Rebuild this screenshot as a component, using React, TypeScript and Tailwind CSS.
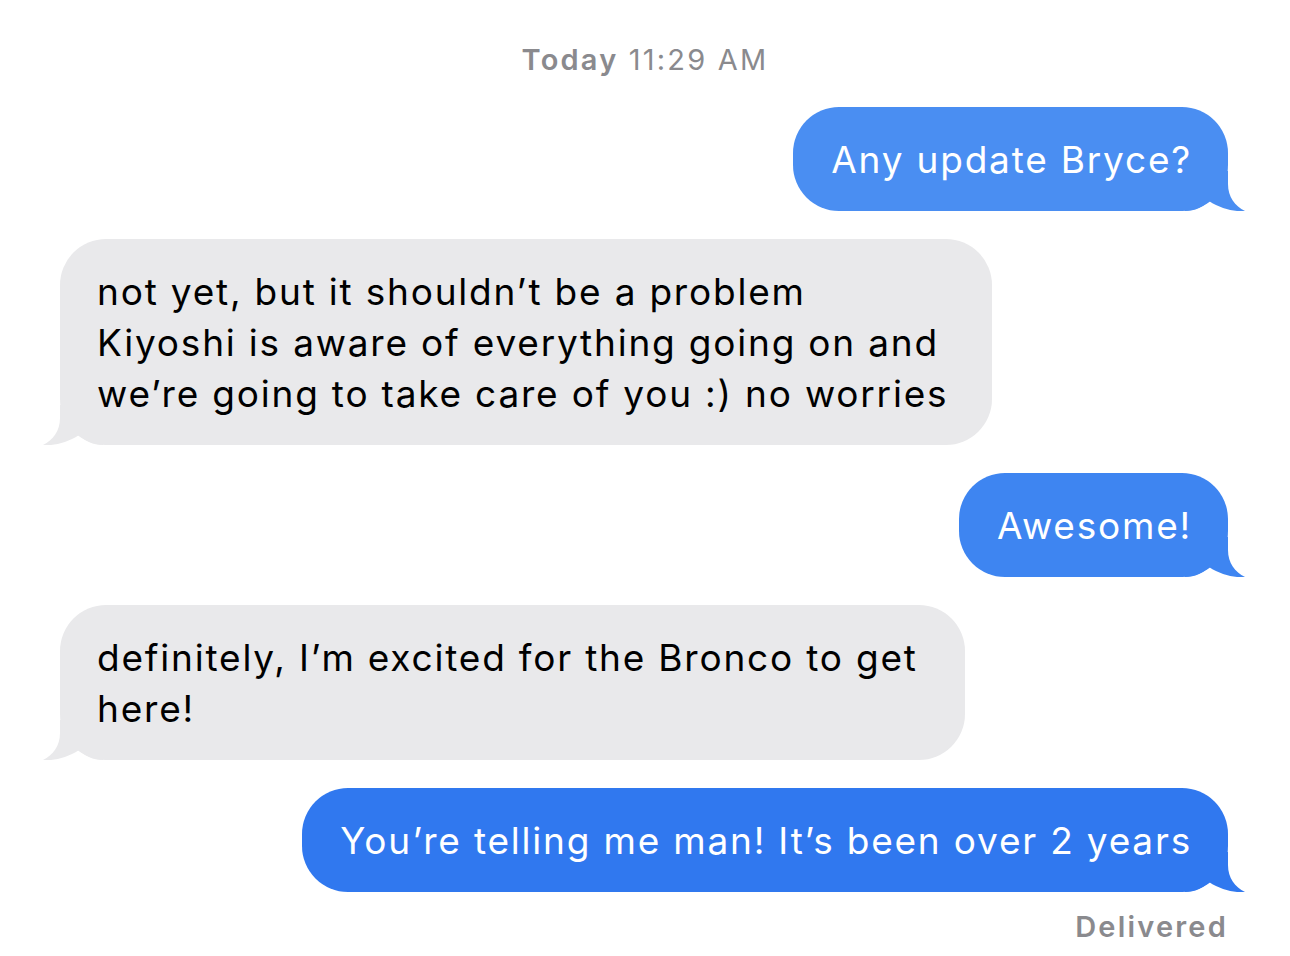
import React from "react";

const FONT = { fontFamily: "Inter, 'Noto Sans', 'Liberation Sans', sans-serif" };

const TAIL_D =
  "M43 0 L43 13 C43 26 50 35 60 40 C50 41 36 38 24 30 C18 36 10 40 0 40 L0 0 Z";

function RightTail({ color }: { color: string }) {
  return (
    <svg
      className="absolute bottom-0 right-[-17px]"
      width="60"
      height="40"
      viewBox="0 0 60 40"
      aria-hidden
    >
      <path d={TAIL_D} fill={color} />
    </svg>
  );
}

function LeftTail({ color }: { color: string }) {
  return (
    <svg
      className="absolute bottom-0 left-[-17px] -scale-x-100"
      width="60"
      height="40"
      viewBox="0 0 60 40"
      aria-hidden
    >
      <path d={TAIL_D} fill={color} />
    </svg>
  );
}

function Sent({ text, color, bg }: { text: string; color: string; bg: string }) {
  return (
    <div className="flex justify-end pr-[62px]">
      <div
        className={`relative rounded-[46px] ${bg} pl-[38px] pr-[36px] py-[26.5px] text-[37px] leading-[51px] tracking-[1.8px] text-white whitespace-nowrap`}
      >
        <span className="relative z-10">{text}</span>
        <RightTail color={color} />
      </div>
    </div>
  );
}

function Received({ lines, width }: { lines: string[]; width: string }) {
  return (
    <div className="flex justify-start pl-[60px]">
      <div
        className={`relative rounded-[46px] bg-[#e9e9eb] px-[37px] py-[26.5px] text-[37px] leading-[51px] tracking-[1.8px] text-black ${width}`}
      >
        <div className="relative z-10">
          {lines.map((l, i) => (
            <div key={i} className="whitespace-nowrap">
              {l}
            </div>
          ))}
        </div>
        <LeftTail color="#e9e9eb" />
      </div>
    </div>
  );
}

export default function App() {
  return (
    <div className="w-[1290px] h-[956px] bg-white overflow-hidden" style={FONT}>
      <div className="pt-[42px] text-center text-[29px] leading-[36px] tracking-[2.2px] text-[#8a8a8e]">
        <span className="font-semibold">Today</span> <span>11:29 AM</span>
      </div>
      <div className="mt-[29px] flex flex-col gap-[28px]">
        <Sent text="Any update Bryce?" color="#4a8ef2" bg="bg-[#4a8ef2]" />
        <Received
          width="w-[932px]"
          lines={[
            "not yet, but it shouldn\u2019t be a problem",
            "Kiyoshi is aware of everything going on and",
            "we\u2019re going to take care of you :) no worries",
          ]}
        />
        <Sent text="Awesome!" color="#3e85f1" bg="bg-[#3e85f1]" />
        <Received
          width="w-[905px]"
          lines={["definitely, I\u2019m excited for the Bronco to get", "here!"]}
        />
        <Sent
          text={"You\u2019re telling me man! It\u2019s been over 2 years"}
          color="#3078ef"
          bg="bg-[#3078ef]"
        />
      </div>
      <div className="mt-[17px] pr-[62px] text-right text-[29px] leading-[36px] font-semibold tracking-[2.2px] text-[#8a8a8e]">
        Delivered
      </div>
    </div>
  );
}
